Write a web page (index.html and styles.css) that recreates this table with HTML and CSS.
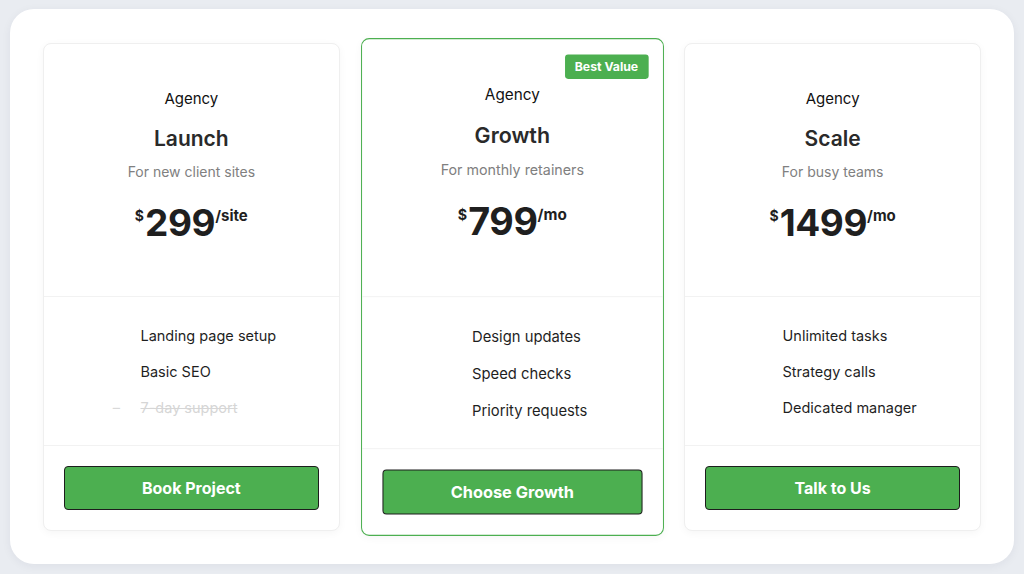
FILE: index.html
```html
<!DOCTYPE html>
<html lang="en">
<head>
<meta charset="utf-8">
<title>Agency Pricing</title>
<link rel="stylesheet" href="styles.css">
</head>
<body>
<main class="panel">
  <section class="card">
    <div class="card-head">
      <div class="eyebrow">Agency</div>
      <h2 class="plan">Launch</h2>
      <p class="desc">For new client sites</p>
      <div class="price"><span class="cur">$</span><span class="amount">299</span><span class="per">/site</span></div>
    </div>
    <ul class="features">
      <li class="feat"><span class="ico"></span><span>Landing page setup</span></li>
      <li class="feat"><span class="ico"></span><span>Basic SEO</span></li>
      <li class="feat off"><span class="ico">–</span><span class="strike">7-day support</span></li>
    </ul>
    <div class="card-foot"><button class="btn">Book Project</button></div>
  </section>
  <section class="card featured">
    <span class="badge">Best Value</span>
    <div class="card-head">
      <div class="eyebrow">Agency</div>
      <h2 class="plan">Growth</h2>
      <p class="desc">For monthly retainers</p>
      <div class="price"><span class="cur">$</span><span class="amount">799</span><span class="per">/mo</span></div>
    </div>
    <ul class="features">
      <li class="feat"><span class="ico"></span><span>Design updates</span></li>
      <li class="feat"><span class="ico"></span><span>Speed checks</span></li>
      <li class="feat"><span class="ico"></span><span>Priority requests</span></li>
    </ul>
    <div class="card-foot"><button class="btn">Choose Growth</button></div>
  </section>
  <section class="card">
    <div class="card-head">
      <div class="eyebrow">Agency</div>
      <h2 class="plan">Scale</h2>
      <p class="desc">For busy teams</p>
      <div class="price"><span class="cur">$</span><span class="amount">1499</span><span class="per">/mo</span></div>
    </div>
    <ul class="features">
      <li class="feat"><span class="ico"></span><span>Unlimited tasks</span></li>
      <li class="feat"><span class="ico"></span><span>Strategy calls</span></li>
      <li class="feat"><span class="ico"></span><span>Dedicated manager</span></li>
    </ul>
    <div class="card-foot"><button class="btn">Talk to Us</button></div>
  </section>
</main>
</body>
</html>
```
FILE: styles.css
```css
* { box-sizing: border-box; }
html, body { margin: 0; padding: 0; }
body {
  background: #e9ecf1;
  font-family: Inter, "Noto Sans", "Liberation Sans", sans-serif;
  color: #1a1a1a;
  padding: 9px 10px 10px;
}
.panel {
  background: #ffffff;
  border-radius: 24px;
  box-shadow: 0 2px 10px rgba(30, 40, 60, 0.06);
  padding: 34px 33px;
  display: grid;
  grid-template-columns: repeat(3, 1fr);
  gap: 24px;
  height: 555px;
}
.card {
  position: relative;
  background: #fff;
  border: 1px solid #efefef;
  border-radius: 8px;
  box-shadow: 0 2px 8px rgba(0, 0, 0, 0.04);
  display: flex;
  flex-direction: column;
}
.card.featured {
  border-color: #4caf50;
  transform: scale(1.02);
}
.badge {
  position: absolute;
  top: 15px;
  right: 14px;
  background: #4caf50;
  color: #fff;
  font-size: 12px;
  font-weight: 700;
  line-height: 24px;
  padding: 0 10px;
  border-radius: 3px;
}
.card-head {
  text-align: center;
  padding: 45px 20px 0;
  height: 253px;
  border-bottom: 1px solid #f2f2f2;
}
.eyebrow {
  font-size: 15px;
  line-height: 20px;
  color: #111;
}
.plan {
  margin: 16px 0 0;
  font-size: 21px;
  line-height: 28px;
  font-weight: 600;
  color: #2a2a2a;
}
.desc {
  margin: 9px 0 0;
  font-size: 14px;
  line-height: 20px;
  color: #808080;
}
.price {
  margin-top: 19px;
  display: flex;
  justify-content: center;
  align-items: flex-start;
  color: #1f1f1f;
  font-weight: 700;
}
.cur {
  font-size: 14px;
  line-height: 18px;
  margin-top: 6px;
  margin-right: 1px;
}
.amount {
  font-size: 37px;
  line-height: 44px;
  letter-spacing: -0.4px;
}
.per {
  font-size: 15px;
  line-height: 18px;
  margin-top: 6px;
}
.features {
  list-style: none;
  margin: 0 auto;
  padding: 21px 0 19px;
  width: max-content;
  height: 148px;
}
.feat {
  display: flex;
  align-items: center;
  gap: 14px;
  font-size: 14.5px;
  line-height: 36px;
  color: #1f1f1f;
}
.ico {
  width: 20px;
  text-align: center;
  color: #d9d9d9;
}
.feat.off { color: #d6d6d6; }
.strike { text-decoration: line-through; }
.card-foot {
  border-top: 1px solid #f2f2f2;
  padding: 20px;
  margin-top: auto;
}
.btn {
  display: block;
  width: 100%;
  height: 44px;
  background: #4caf50;
  color: #fff;
  font-family: inherit;
  font-size: 16px;
  font-weight: 700;
  border: 1px solid #1d1d1d;
  border-radius: 4px;
  cursor: pointer;
}
```
